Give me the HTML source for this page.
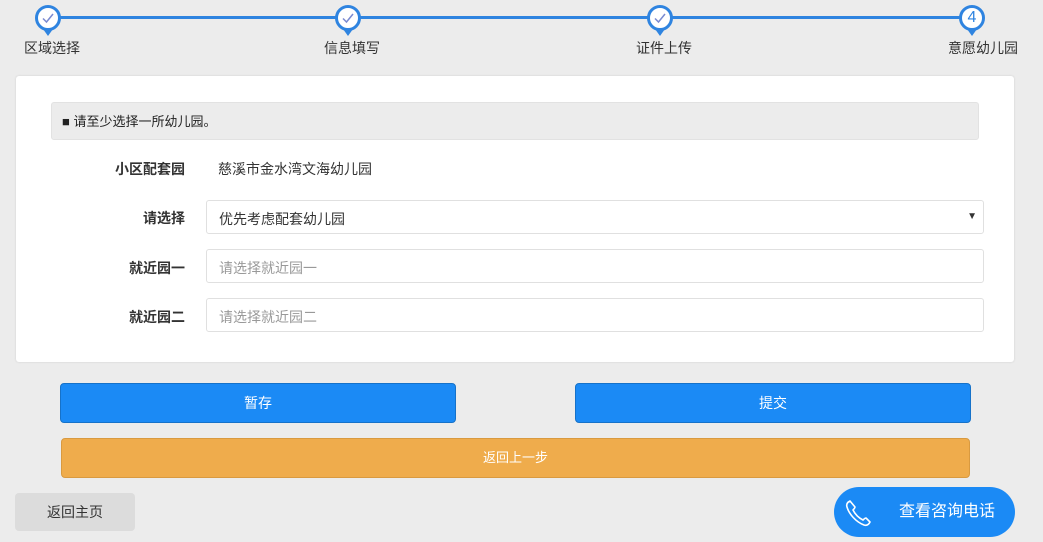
<!DOCTYPE html>
<html><head><meta charset="utf-8"><style>
*{box-sizing:border-box;margin:0;padding:0}
body{width:1043px;height:542px;background:#ececec;font-family:"Liberation Sans","Noto Sans CJK SC",sans-serif;font-size:14px;color:#333;position:relative;overflow:hidden}
.abs{position:absolute}
.line{left:48px;top:16px;width:924px;height:3px;background:#2f84e0}
.step{width:26px;height:26px;border-radius:50%;border:3px solid #2f84e0;background:#fff;top:5px;text-align:center;line-height:20px;color:#2f84e0;font-size:16px}
.tip{width:0;height:0;border-left:5px solid transparent;border-right:5px solid transparent;border-top:7px solid #2f84e0;top:29px}
.lbl{top:38px;font-size:14px;color:#333;white-space:nowrap}
.card{left:16px;top:76px;width:998px;height:286px;background:#fff;border-radius:3px;box-shadow:0 0 2px #ccc}
.notice{left:51px;top:102px;width:928px;height:38px;background:#ececec;border:1px solid #e2e2e2;border-radius:3px;padding:8px 10px;font-size:13px;color:#222}
.fl{width:185px;text-align:right;font-weight:bold;font-size:14px;color:#333;left:0}
.inp{left:206px;width:778px;height:34px;border:1px solid #e0e0e0;border-radius:3px;padding:8px 12px;font-size:14px}
.btn{height:40px;background:#1b8af5;border:1px solid #1672c9;border-radius:4px;color:#fff;text-align:center;line-height:38px;font-size:14px}
</style></head><body>
<div class="abs line"></div>
<div class="abs step" style="left:35px"><svg width="20" height="20" viewBox="0 0 20 20"><path d="M5 10.5l3.5 3.5L15 6" stroke="#7a8ad0" stroke-width="1.5" fill="none"/></svg></div>
<div class="abs tip" style="left:43px"></div>
<div class="abs step" style="left:335px"><svg width="20" height="20" viewBox="0 0 20 20"><path d="M5 10.5l3.5 3.5L15 6" stroke="#7a8ad0" stroke-width="1.5" fill="none"/></svg></div>
<div class="abs tip" style="left:343px"></div>
<div class="abs step" style="left:647px"><svg width="20" height="20" viewBox="0 0 20 20"><path d="M5 10.5l3.5 3.5L15 6" stroke="#7a8ad0" stroke-width="1.5" fill="none"/></svg></div>
<div class="abs tip" style="left:655px"></div>
<div class="abs step" style="left:959px">4</div>
<div class="abs tip" style="left:967px"></div>
<div class="abs lbl" style="left:24px">区域选择</div>
<div class="abs lbl" style="left:324px">信息填写</div>
<div class="abs lbl" style="left:636px">证件上传</div>
<div class="abs lbl" style="left:948px">意愿幼儿园</div>

<div class="abs card"></div>
<div class="abs notice">■ 请至少选择一所幼儿园。</div>
<div class="abs fl" style="top:159px">小区配套园</div>
<div class="abs" style="left:218px;top:159px">慈溪市金水湾文海幼儿园</div>
<div class="abs fl" style="top:208px">请选择</div>
<div class="abs inp" style="top:200px;color:#333">优先考虑配套幼儿园<span style="position:absolute;right:6px;top:10px;font-size:10px">▼</span></div>
<div class="abs fl" style="top:258px">就近园一</div>
<div class="abs inp" style="top:249px;color:#999">请选择就近园一</div>
<div class="abs fl" style="top:307px">就近园二</div>
<div class="abs inp" style="top:298px;color:#999">请选择就近园二</div>

<div class="abs btn" style="left:60px;top:383px;width:396px">暂存</div>
<div class="abs btn" style="left:575px;top:383px;width:396px">提交</div>
<div class="abs btn" style="left:61px;top:438px;width:909px;background:#efac4c;border-color:#d99a40;font-size:13px">返回上一步</div>
<div class="abs" style="left:15px;top:493px;width:120px;height:38px;background:#dcdcdc;border-radius:4px;text-align:center;line-height:38px;color:#333">返回主页</div>
<div class="abs" style="left:834px;top:487px;width:181px;height:50px;background:#1b8af5;border-radius:25px;color:#fff;font-size:16px;line-height:50px;padding-left:65px">查看咨询电话</div>
<svg class="abs" style="left:844px;top:498px" width="30" height="30" viewBox="0 0 30 30"><path d="M6 3c-2 1-4 3-3 6 2 7 9 15 17 18 3 1 5-1 6-3l-4-4c-1 0-2 1-3 2-4-2-8-6-10-10 1-1 2-2 2-3z" stroke="#fff" stroke-width="1.6" fill="none" stroke-linejoin="round"/></svg>
</body></html>
